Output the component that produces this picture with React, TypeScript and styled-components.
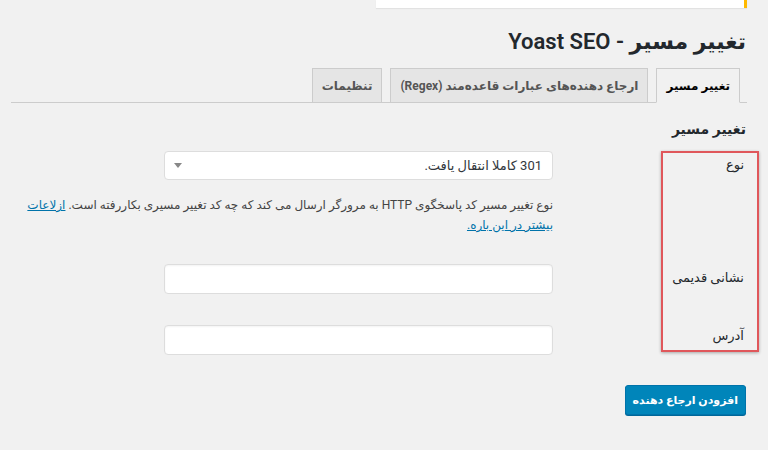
import styled, { createGlobalStyle } from "styled-components";

const GlobalStyle = createGlobalStyle`
  body {
    margin: 0;
    background: #f1f1f1;
    font-family: "Roboto", "DejaVu Sans", sans-serif;
    color: #23282d;
  }
`;

const Page = styled.div`
  direction: rtl;
  width: 768px;
  height: 450px;
  padding: 0 21px 0 21px;
  box-sizing: border-box;
  position: relative;
  overflow: hidden;
`;

const Notice = styled.div`
  width: 368px;
  height: 8px;
  background: #fff;
  border-right: 3px solid #ffb900;
  box-shadow: 0 1px 1px rgba(0, 0, 0, 0.06);
`;

const Title = styled.h1`
  margin: 18px 1px 0 0;
  font-size: 22px;
  line-height: 31px;
  font-weight: 600;
  color: #23282d;
`;

const TabBar = styled.div`
  display: flex;
  gap: 8px;
  margin: 11px 0 0 -10px;
  padding-right: 7px;
  height: 34px;
  border-bottom: 1px solid #ccc;
`;

const Tab = styled.div<{ $active?: boolean }>`
  box-sizing: border-box;
  height: 35px;
  padding: 0 9px;
  display: flex;
  align-items: center;
  font-size: 12px;
  font-weight: 700;
  color: ${(p) => (p.$active ? "#000" : "#555")};
  background: ${(p) => (p.$active ? "#f1f1f1" : "#e5e5e5")};
  border: 1px solid #ccc;
  border-bottom-color: ${(p) => (p.$active ? "#f1f1f1" : "#ccc")};
`;

const SectionTitle = styled.h2`
  margin: 14px 1px 0 0;
  font-size: 14px;
  line-height: 24px;
  font-weight: 700;
  color: #23282d;
`;

const Form = styled.div`
  display: grid;
  grid-template-columns: 194px 1fr;
  margin-top: 10px;
`;

const Label = styled.div<{ $top: number }>`
  padding: ${(p) => p.$top}px 3px 0 0;
  font-size: 13px;
  line-height: 20px;
  color: #23282d;
`;

const Field = styled.div<{ $top: number }>`
  padding-top: ${(p) => p.$top}px;
`;

const SelectBox = styled.div`
  box-sizing: border-box;
  width: 389px;
  height: 29px;
  background: #fff;
  border: 1px solid #ddd;
  border-radius: 4px;
  display: flex;
  align-items: center;
  justify-content: space-between;
  padding: 0 10px 0 9px;
  font-size: 13px;
  color: #32373c;
`;

const Arrow = styled.span`
  width: 0;
  height: 0;
  border-left: 4px solid transparent;
  border-right: 4px solid transparent;
  border-top: 5px solid #888;
`;

const Description = styled.p`
  margin: 15px 0 0 0;
  font-size: 12px;
  line-height: 20px;
  color: #444;

  a {
    color: #0073aa;
  }
`;

const TextInput = styled.div`
  box-sizing: border-box;
  width: 389px;
  height: 30px;
  background: #fff;
  border: 1px solid #ddd;
  border-radius: 4px;
  box-shadow: inset 0 1px 2px rgba(0, 0, 0, 0.05);
`;

const Button = styled.button`
  margin: 30px 1px 0 0;
  height: 30px;
  padding: 0 7px;
  background: #0085ba;
  border: 1px solid #0073aa;
  border-radius: 3px;
  color: #fff;
  font-family: "Roboto", "DejaVu Sans", sans-serif;
  font-size: 11px;
  font-weight: 700;
  box-shadow: 0 1px 0 #006799;
`;

const Highlight = styled.div`
  position: absolute;
  left: 661px;
  top: 151px;
  width: 98px;
  height: 201px;
  box-sizing: border-box;
  border: 2px solid #e0575b;
  box-shadow: 0 1px 3px rgba(0, 0, 0, 0.3);
  pointer-events: none;
`;

export default function App() {
  return (
    <Page>
      <GlobalStyle />
      <Notice />
      <Title>تغییر مسیر - Yoast SEO</Title>
      <TabBar>
        <Tab $active>تغییر مسیر</Tab>
        <Tab>ارجاع دهنده‌های عبارات قاعده‌مند (Regex)</Tab>
        <Tab>تنظیمات</Tab>
      </TabBar>
      <SectionTitle>تغییر مسیر</SectionTitle>
      <Form>
        <Label $top={4}>نوع</Label>
        <Field $top={0}>
          <SelectBox>
            <span>301 کاملا انتقال یافت.</span>
            <Arrow />
          </SelectBox>
          <Description>
            نوع تغییر مسیر کد پاسخگوی HTTP به مرورگر ارسال می کند که چه کد تغییر مسیری بکاررفته است.{" "}
            <a href="#">ازلاعات بیشتر در این باره.</a>
          </Description>
        </Field>
        <Label $top={33}>نشانی قدیمی</Label>
        <Field $top={29}>
          <TextInput />
        </Field>
        <Label $top={32}>آدرس</Label>
        <Field $top={31}>
          <TextInput />
        </Field>
      </Form>
      <Button>افزودن ارجاع دهنده</Button>
      <Highlight />
    </Page>
  );
}
